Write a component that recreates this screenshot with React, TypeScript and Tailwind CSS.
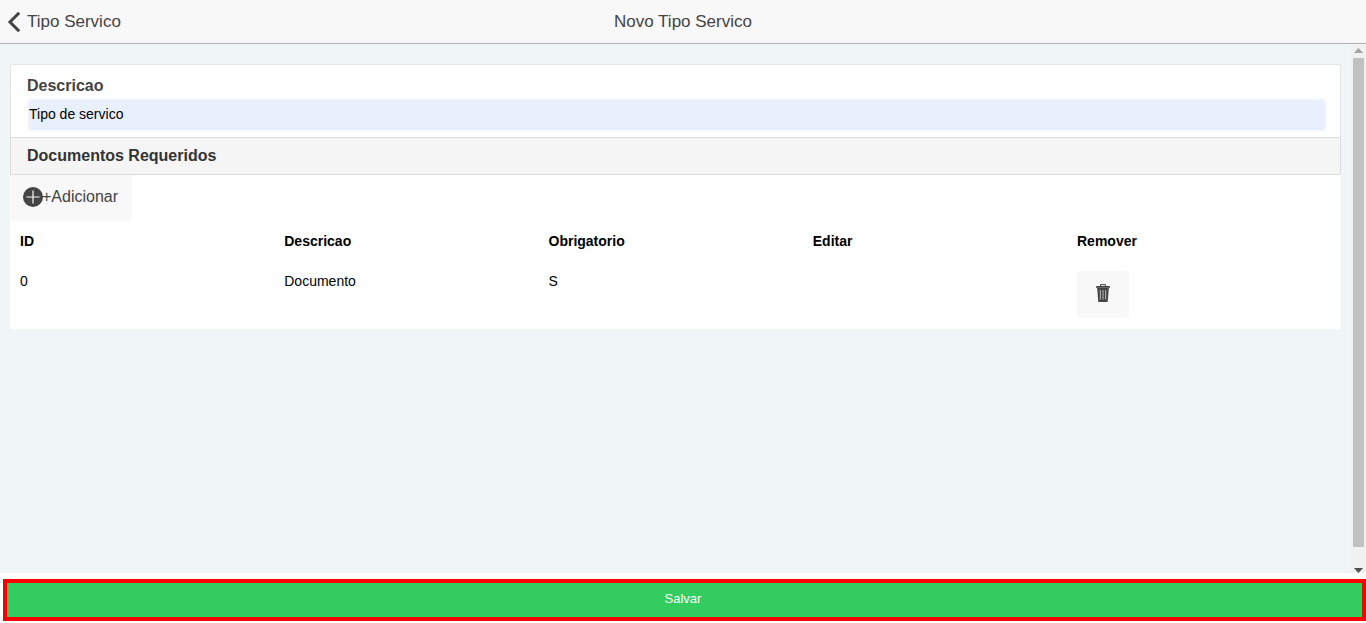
const columns = ["ID", "Descricao", "Obrigatorio", "Editar", "Remover"];

export default function App() {
  return (
    <div className="h-[623px] w-[1366px] flex flex-col overflow-hidden bg-white font-['Liberation_Sans',Arial,sans-serif]">
      {/* Header */}
      <div className="relative h-[44px] shrink-0 flex items-center justify-center bg-[#f8f8f8] border-b border-[#b2b2b2]">
        <div className="absolute left-[7px] top-0 h-[43px] flex items-center text-[17px] text-[#444]">
          <svg width="15" height="22" viewBox="0 0 15 22" className="shrink-0">
            <path d="M12.2 1.8 3 11l9.2 9.2" fill="none" stroke="#444" strokeWidth="3" />
          </svg>
          <span className="ml-[5px]">Tipo Servico</span>
        </div>
        <span className="text-[17px] text-[#444]">Novo Tipo Servico</span>
      </div>

      {/* Content */}
      <div className="h-[529px] shrink-0 flex bg-[#f0f5f8]">
        <div className="flex-1 pt-[20px] pl-[10px] pr-[10px]">
          <div className="bg-white border-t border-x border-[#e4e4e4] rounded-t-[2px]">
            <div className="h-[72px] pt-[11px] pl-[16px] pr-[15px]">
              <div className="text-[16px] leading-[20px] font-bold text-[#444]">Descricao</div>
              <div className="mt-[4px] ml-[2px] pb-px h-[30px] flex items-center rounded-[3px] bg-[#e8f0fe] shadow-[0_0_0_2px_#f7f7fd] text-[14px] text-black">
                Tipo de servico
              </div>
            </div>
            <div className="h-[38px] -mx-px flex items-center pl-[16px] bg-[#f5f5f5] border border-[#dcdcdc] text-[16px] font-bold text-[#333]">
              Documentos Requeridos
            </div>
          </div>
          <div className="bg-white h-[154px] w-[1331px]">
            <div className="w-[122px] h-[46px] pb-[2px] flex items-center pl-[13px] bg-[#f8f8f8] rounded-b-[4px] text-[16px] text-[#444]">
              <svg width="20" height="20" viewBox="0 0 20 20" className="shrink-0">
                <circle cx="10" cy="10" r="10" fill="#444" />
                <path d="M10 3.5v13M3.5 10h13" stroke="#f8f8f8" strokeWidth="1.2" />
              </svg>
              <span className="-ml-px">+Adicionar</span>
            </div>
            <div className="w-[1331px] pl-[10px] grid grid-cols-[repeat(5,264.25px)] text-[14px] text-black">
              {columns.map((c) => (
                <div key={c} className="h-[40px] flex items-center font-bold">{c}</div>
              ))}
              <div className="pt-[12px] leading-[16px]">0</div>
              <div className="pt-[12px] leading-[16px]">Documento</div>
              <div className="pt-[12px] leading-[16px]">S</div>
              <div />
              <div className="pt-[10px]">
                <div className="w-[52px] h-[47px] flex items-center justify-center bg-[#f8f8f8] rounded-[4px]">
                  <svg width="14" height="18" viewBox="0 0 14 18" className="shrink-0 -mt-[4px]">
                    <path d="M0.5 2.5h13v1.2H0.5zM4.5 2.5V0.6h5v1.9" fill="none" stroke="#444" strokeWidth="1" />
                    <path d="M1.2 4h11.6l-1 13.2a0.8 0.8 0 0 1-0.8 0.8H3a0.8 0.8 0 0 1-0.8-0.8z" fill="#444" />
                    <path d="M4.3 6v9.5M7 6v9.5M9.7 6v9.5" stroke="#bdbdbd" strokeWidth="1" />
                  </svg>
                </div>
              </div>
            </div>
          </div>
        </div>

        {/* Scrollbar */}
        <div className="w-[15px] shrink-0 flex flex-col items-center bg-[#f1f1f1]">
          <svg width="9" height="5" viewBox="0 0 9 5" className="mt-[4px] shrink-0">
            <path d="M4.5 0 9 5H0z" fill="#a3a3a3" />
          </svg>
          <div className="mt-[5px] w-[11px] h-[489px] bg-[#c1c1c1]" />
          <svg width="9" height="5" viewBox="0 0 9 5" className="mt-[21px] shrink-0">
            <path d="M0 0h9L4.5 5z" fill="#505050" />
          </svg>
        </div>
      </div>

      {/* Footer */}
      <div className="flex-1 pt-[6px] pl-[3px] pb-[2px]">
        <div className="h-[42px] pr-[3px] pb-[2px] border-[4px] border-[#ff0000] bg-[#33cd5f] flex items-center justify-center text-[13px] text-white">
          Salvar
        </div>
      </div>
    </div>
  );
}
